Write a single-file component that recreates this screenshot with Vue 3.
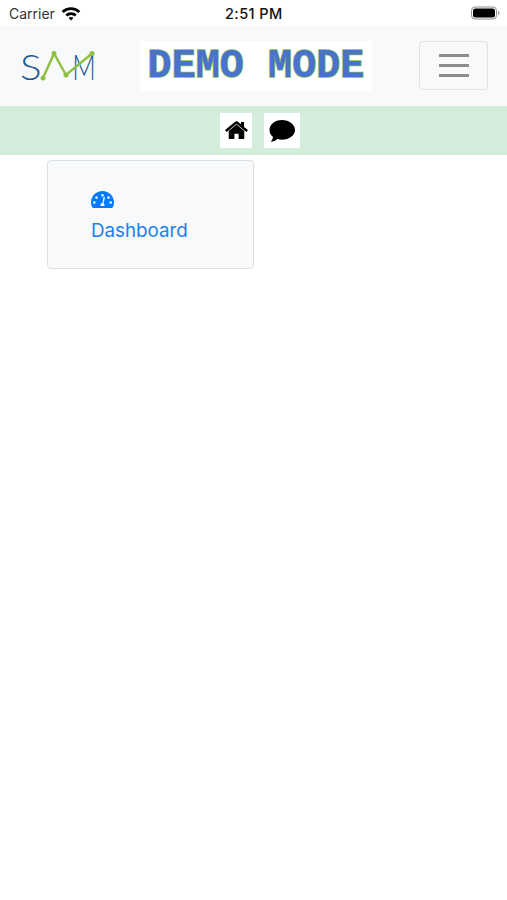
<script setup>
const navIcons = ['home', 'chat']
</script>

<template>
  <div class="screen">
    <div class="status-bar">
      <div class="status-left">
        <span>Carrier</span>
        <svg class="wifi" viewBox="0 0 20 15" width="20" height="15">
          <path d="M10 1.2c3.6 0 6.9 1.4 9.3 3.7l-1.9 2.1A10.6 10.6 0 0 0 10 4.1 10.6 10.6 0 0 0 2.6 7L.7 4.9A13.5 13.5 0 0 1 10 1.2z" fill="#000" />
          <path d="M10 6.2c2.2 0 4.2.9 5.7 2.2l-1.9 2.1A5.7 5.7 0 0 0 10 9a5.7 5.7 0 0 0-3.8 1.5L4.3 8.4A8.4 8.4 0 0 1 10 6.2z" fill="#000" />
          <path d="M10 11c1 0 1.8.3 2.4.9L10 14.5l-2.4-2.6c.6-.6 1.4-.9 2.4-.9z" fill="#000" />
        </svg>
      </div>
      <span class="status-time">2:51 PM</span>
      <svg class="battery" viewBox="0 0 30 14" width="30" height="14">
        <rect x="0.5" y="1" width="25" height="12" rx="3.5" fill="none" stroke="#8c8c8c" stroke-width="1" />
        <rect x="2" y="2.5" width="22" height="9" rx="2.2" fill="#000" />
        <path d="M27 5v4c.9-.3 1.5-1.100 1.500-2S27.900 5.300 27 5z" fill="#9a9a9a" />
      </svg>
    </div>

    <nav class="navbar">
      <div class="logo">
        <span class="logo-text"><span class="logo-s">S</span><span class="logo-m">M</span></span>
        <svg class="logo-line" viewBox="0 0 76 32" width="76" height="32">
          <path d="M23 28 L34 3.500 L46 25 L72 3.500" fill="none" stroke="#8dc03f" stroke-width="2.400" />
          <circle cx="23" cy="28" r="2.500" fill="#8dc03f" />
          <circle cx="34" cy="3.500" r="2.500" fill="#8dc03f" />
          <circle cx="46" cy="25" r="2.500" fill="#8dc03f" />
          <circle cx="72" cy="3.500" r="2.500" fill="#8dc03f" />
        </svg>
      </div>
      <div class="demo-banner"><span>DEMO MODE</span></div>
      <button class="toggler" type="button">
        <span></span>
        <span></span>
        <span></span>
      </button>
    </nav>

    <div class="subnav">
      <a v-for="icon in navIcons" :key="icon" class="subnav-btn" :class="icon">
        <svg v-if="icon === 'home'" viewBox="0 0 24 20" width="23" height="19">
          <path d="M12 3.600 3.800 10.400V18a1 1 0 0 0 1 1h5v-5.500h4.400V19h5a1 1 0 0 0 1-1v-7.600z" fill="#000" />
          <path d="M23.700 9.300 20 6.300V1.500a.5.5 0 0 0-.5-.5h-2.400a.5.5 0 0 0-.5.5v2L13.200.6a2 2 0 0 0-2.400 0L.3 9.300a.5.5 0 0 0 0 .7l1 1.200a.5.5 0 0 0 .7.100L12 3l10 8.300a.5.5 0 0 0 .7-.1l1-1.200a.5.500 0 0 0 0-.7z" fill="#000" />
        </svg>
        <svg v-else viewBox="0 0 28 24" width="28" height="24">
          <path d="M14 1C6.600 1 1.500 5.600 1.500 11c0 3 1.300 5.300 3.500 7-.2 1.800-1 3.300-2.300 4.800 2.800-.2 5.100-1.200 6.800-2.800 1.400.5 3 .7 4.500.7 7.200 0 13-4.300 13-9.700S21.200 1 14 1z" fill="#000" />
        </svg>
      </a>
    </div>

    <main class="content">
      <a class="card">
        <svg class="gauge" viewBox="0 0 23 17" width="23" height="17">
          <path fill-rule="evenodd" fill="#007bff" d="M11.500 0C5.100 0 0 5.100 0 11.500c0 1.900.5 3.500 1.300 5 .2.300.5.500.9.500h18.600c.4 0 .7-.2.900-.5.800-1.500 1.300-3.100 1.300-5C23 5.100 17.900 0 11.500 0zm0 3a1.300 1.300 0 1 1 0 2.600 1.300 1.300 0 0 1 0-2.600zM5.500 5.300a1.300 1.300 0 1 1 0 2.600 1.300 1.300 0 0 1 0-2.600zM3.300 12.800a1.300 1.300 0 1 1 0-2.600 1.300 1.300 0 0 1 0 2.600zm16.400 0a1.300 1.300 0 1 1 0-2.600 1.300 1.300 0 0 1 0 2.600zM17.500 7.900a1.300 1.300 0 1 1 0-2.600 1.300 1.300 0 0 1 0 2.600zM13.900 6.500l-1.300 5.700c.6.500.9 1.100.9 1.800 0 .4-.1.700-.2 1h-3.600c-.1-.3-.2-.6-.2-1 0-1.100.9-2 2-2l1-5.900c.1-.5 1.500-.2 1.400.4z" />
        </svg>
        <span class="card-label">Dashboard</span>
      </a>
    </main>
  </div>
</template>

<style scoped>
.screen {
  width: 507px;
  height: 900px;
  background: #fff;
  overflow: hidden;
  font-family: "Inter", "Liberation Sans", sans-serif;
}

.status-bar {
  height: 26px;
  display: flex;
  align-items: center;
  justify-content: space-between;
  padding: 0 7px 0 9px;
  font-size: 14px;
  color: #111;
  position: relative;
}

.status-left {
  display: flex;
  align-items: center;
  gap: 6px;
  color: #333;
}

.status-time {
  position: absolute;
  left: 225px;
  font-size: 14.5px;
  letter-spacing: 0.4px;
  font-weight: 500;
}

.battery {
  margin-right: -1px;
}

.navbar {
  height: 80px;
  background: #f8f9fa;
  display: flex;
  align-items: center;
  padding: 0 19px 0 20px;
  box-sizing: border-box;
}

.logo {
  position: relative;
  width: 76px;
  height: 32px;
}

.logo-text {
  display: flex;
  align-items: center;
  height: 32px;
  font-family: "Lato", sans-serif;
  font-weight: 300;
  font-size: 36px;
  color: #1e5a96;
  line-height: 32px;
}

.logo-s {
  display: inline-block;
  transform: scaleX(1.12);
  transform-origin: left center;
}

.logo-m {
  position: absolute;
  right: 0;
  top: 0;
  transform: scaleX(0.72);
  transform-origin: right center;
}

.logo-line {
  position: absolute;
  left: 0;
  top: 0;
}

.demo-banner {
  width: 232px;
  height: 50px;
  margin-left: 44px;
  background: #fff;
  display: flex;
  align-items: center;
  justify-content: center;
}

.demo-banner span {
  font-family: "Liberation Mono", monospace;
  font-weight: 700;
  font-size: 40px;
  letter-spacing: 0.1px;
  white-space: pre;
  color: #4a72cc;
  -webkit-text-stroke: 1.5px #7fbf5e;
  paint-order: stroke fill;
}

.toggler {
  width: 69px;
  height: 49px;
  margin: 0 0 2px auto;
  padding: 0;
  background: transparent;
  border: 1px solid #dfe0e1;
  border-radius: 4px;
  display: flex;
  flex-direction: column;
  align-items: center;
  justify-content: center;
  gap: 7px;
}

.toggler span {
  width: 30px;
  height: 3px;
  background: #8c8c8c;
}

.subnav {
  height: 49px;
  background: #d4edda;
  display: flex;
  align-items: center;
  justify-content: center;
  gap: 12px;
  padding-left: 13px;
  box-sizing: border-box;
}

.subnav-btn {
  height: 35px;
  background: #fff;
  display: flex;
  align-items: center;
  justify-content: center;
}

.subnav-btn.home {
  width: 32px;
}

.subnav-btn.chat {
  width: 36px;
}

.content {
  padding: 5px 0 0 47px;
}

.card {
  width: 207px;
  height: 109px;
  box-sizing: border-box;
  background: #f8f9fa;
  border: 1px solid #dcdfe2;
  border-radius: 4px;
  padding: 30px 0 0 43px;
  display: flex;
  flex-direction: column;
  align-items: flex-start;
  color: #1a82f0;
}

.gauge {
  display: block;
}

.card-label {
  margin-top: 11px;
  font-size: 18.8px;
  line-height: 24px;
}
</style>
